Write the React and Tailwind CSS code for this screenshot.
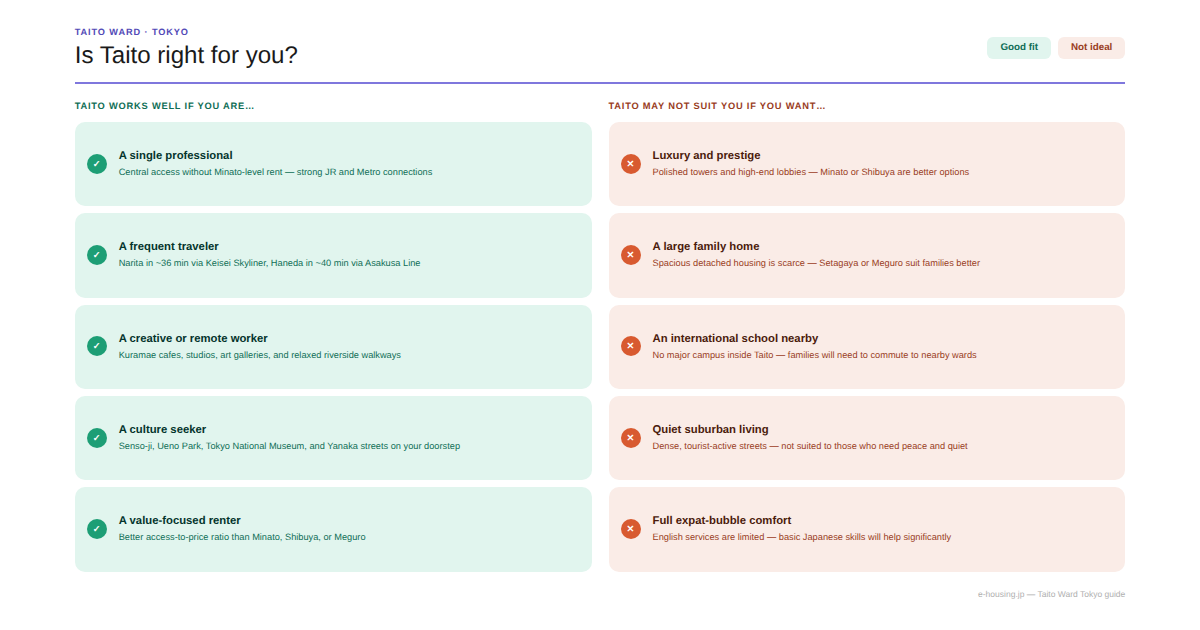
const good = [
  ['A single professional', 'Central access without Minato-level rent — strong JR and Metro connections'],
  ['A frequent traveler', 'Narita in ~36 min via Keisei Skyliner, Haneda in ~40 min via Asakusa Line'],
  ['A creative or remote worker', 'Kuramae cafes, studios, art galleries, and relaxed riverside walkways'],
  ['A culture seeker', 'Senso-ji, Ueno Park, Tokyo National Museum, and Yanaka streets on your doorstep'],
  ['A value-focused renter', 'Better access-to-price ratio than Minato, Shibuya, or Meguro'],
];

const bad = [
  ['Luxury and prestige', 'Polished towers and high-end lobbies — Minato or Shibuya are better options'],
  ['A large family home', 'Spacious detached housing is scarce — Setagaya or Meguro suit families better'],
  ['An international school nearby', 'No major campus inside Taito — families will need to commute to nearby wards'],
  ['Quiet suburban living', 'Dense, tourist-active streets — not suited to those who need peace and quiet'],
  ['Full expat-bubble comfort', 'English services are limited — basic Japanese skills will help significantly'],
];

const GoodCard = ({ title, text }) => (
  <div className="flex flex-1 items-center gap-3 rounded-[10px] bg-[#e1f5ee] px-3">
    <div className="mb-[1px] flex h-5 w-5 shrink-0 items-center justify-center rounded-full bg-[#1d9e75] text-[9.4px] font-bold text-white">✓</div>
    <div className="mb-[0.2px]">
      <p className="text-[11.3px] leading-[15px] font-bold text-[#04342c]">{title}</p>
      <p className="mt-[1px] text-[9.24px] leading-[14px] text-[#0f6e56]">{text}</p>
    </div>
  </div>
);

const BadCard = ({ title, text }) => (
  <div className="flex flex-1 items-center gap-3 rounded-[10px] bg-[#faece7] px-3">
    <div className="mb-[1px] flex h-5 w-5 shrink-0 items-center justify-center rounded-full bg-[#d85a30] text-[9.4px] font-bold text-white">✕</div>
    <div className="mb-[0.2px]">
      <p className="text-[11.3px] leading-[15px] font-bold text-[#4a1b0c]">{title}</p>
      <p className="mt-[1px] text-[9.24px] leading-[14px] text-[#993c1d]">{text}</p>
    </div>
  </div>
);

export default function App() {
  return (
    <div className="flex h-[630px] w-[1200px] flex-col bg-white px-[74.7px] pt-[26px] font-['Liberation_Sans',Arial,sans-serif] [text-rendering:geometricPrecision]">
      <header className="flex items-center justify-between border-b-2 border-[#7f77dd] pb-[11px]">
        <div>
          <p className="text-[9.2px] leading-[12px] font-bold tracking-[0.9px] text-[#534ab7]">TAITO WARD · TOKYO</p>
          <h1 className="mt-[3px] text-[24.1px] leading-[30px] font-normal text-[#1a1a1a]">Is Taito right for you?</h1>
        </div>
        <div className="mb-[2px] flex gap-[7px]">
          <span className="rounded-[6px] bg-[#e1f5ee] px-[13px] py-[5px] text-[9.8px] leading-[12px] font-bold text-[#0f6e56]">Good fit</span>
          <span className="rounded-[6px] bg-[#faece7] px-[13px] py-[5px] text-[9.8px] leading-[12px] font-bold text-[#993c1d]">Not ideal</span>
        </div>
      </header>

      <div className="mt-[16px] grid h-[471.6px] grid-cols-2 gap-[17px]">
        <section className="flex flex-col">
          <h2 className="mb-[10px] text-[9.3px] leading-[12px] font-bold tracking-[0.78px] text-[#0f6e56]">TAITO WORKS WELL IF YOU ARE…</h2>
          <div className="flex flex-1 flex-col gap-[7px]">
            {good.map(([title, text]) => <GoodCard key={title} title={title} text={text} />)}
          </div>
        </section>
        <section className="flex flex-col">
          <h2 className="mb-[10px] text-[9.3px] leading-[12px] font-bold tracking-[0.78px] text-[#993c1d]">TAITO MAY NOT SUIT YOU IF YOU WANT…</h2>
          <div className="flex flex-1 flex-col gap-[7px]">
            {bad.map(([title, text]) => <BadCard key={title} title={title} text={text} />)}
          </div>
        </section>
      </div>

      <p className="mt-[16.4px] text-right text-[8.5px] leading-[12px] text-[#b0b0b0]">e-housing.jp — Taito Ward Tokyo guide</p>
    </div>
  );
}
